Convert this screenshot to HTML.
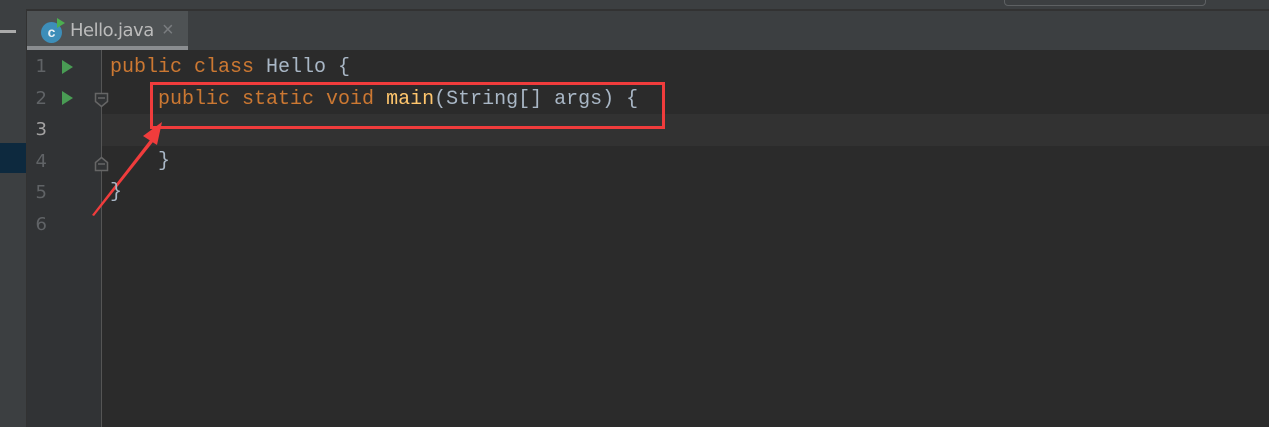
<!DOCTYPE html>
<html><head><style>
body{margin:0;width:1269px;height:427px;overflow:hidden;background:#2b2b2b;position:relative;font-family:"Liberation Mono",monospace}
div{position:absolute}
.ln{left:27px;width:20px;text-align:right;color:#606366;font-size:18px;font-family:"DejaVu Sans",sans-serif}
.code{left:110px;font-size:20px;color:#a9b7c6;white-space:pre;line-height:24px}
.k{color:#cc7832}.f{color:#ffc66d}
.run{left:62px;width:0;height:0;border-left:11px solid #499c54;border-top:7px solid transparent;border-bottom:7px solid transparent}
</style></head><body>
<div style="left:0;top:0;width:1269px;height:9px;background:#3c3f41"></div>
<div style="left:1004px;top:-4px;width:200px;height:8px;border:1px solid #5e6163;border-radius:4px"></div>
<div style="left:0;top:9px;width:1269px;height:2px;background:#323232"></div>
<div style="left:0;top:11px;width:1269px;height:39px;background:#3c3f41"></div>
<div style="left:0;top:0;width:26px;height:427px;background:#3c3f41"></div>
<div style="left:0;top:30px;width:16px;height:3px;background:#aaa"></div>
<div style="left:26px;top:11px;width:1px;height:416px;background:#323232"></div>
<div style="left:0;top:143px;width:26px;height:30px;background:#0d293e"></div>
<div style="left:27px;top:11px;width:161px;height:36px;background:#4e5254"></div>
<div style="left:27px;top:46px;width:161px;height:4px;background:#8a8d90"></div>
<div style="left:41px;top:22px;width:21px;height:21px;border-radius:50%;background:#3d8eb9;color:#e8f0f4;font:bold 14px 'Liberation Sans',sans-serif;text-align:center;line-height:21px">c</div>
<div style="left:57px;top:18px;width:0;height:0;border-left:8px solid #4caf50;border-top:5px solid transparent;border-bottom:5px solid transparent"></div>
<div style="left:70px;top:20px;color:#bbbbbb;font:18px 'DejaVu Sans',sans-serif;letter-spacing:-0.5px">Hello.java</div>
<div style="left:162px;top:19px;color:#7a7d80;font:20px 'Liberation Sans',sans-serif">×</div>
<div style="left:27px;top:50px;width:74px;height:377px;background:#313335"></div>
<div style="left:101px;top:50px;width:1px;height:377px;background:#555"></div>
<div style="left:102px;top:114px;width:1167px;height:32px;background:#323232"></div>
<div class="ln" style="top:56px">1</div>
<div class="ln" style="top:88px">2</div>
<div class="ln" style="top:119px;color:#a4a3a3">3</div>
<div class="ln" style="top:151px">4</div>
<div class="ln" style="top:182px">5</div>
<div class="ln" style="top:214px">6</div>
<div class="run" style="top:60px"></div>
<div class="run" style="top:91px"></div>
<svg style="position:absolute;left:0;top:0" width="1269" height="427">
<path d="M95.5 93.5h12v8l-6 5l-6-5z" fill="#313335" stroke="#666" stroke-width="1.5"/>
<line x1="98" y1="98" x2="105" y2="98" stroke="#666" stroke-width="1.5"/>
<path d="M95.5 170.5h12v-8l-6-5l-6 5z" fill="#313335" stroke="#666" stroke-width="1.5"/>
<line x1="98" y1="164" x2="105" y2="164" stroke="#666" stroke-width="1.5"/>
<polygon points="92,215 150,140 153,142 94,216" fill="#f03c3c"/>
<polygon points="162,122 143,136 157,145" fill="#f03c3c"/>
</svg>
<div class="code" style="top:56px"><span class="k">public class </span>Hello {</div>
<div class="code" style="top:88px">    <span class="k">public static void </span><span class="f">main</span>(String[] args) {</div>
<div class="code" style="top:150px">    }</div>
<div class="code" style="top:181px">}</div>
<div style="left:150px;top:82px;width:509px;height:41px;border:3px solid #f03c3c"></div>
</body></html>
